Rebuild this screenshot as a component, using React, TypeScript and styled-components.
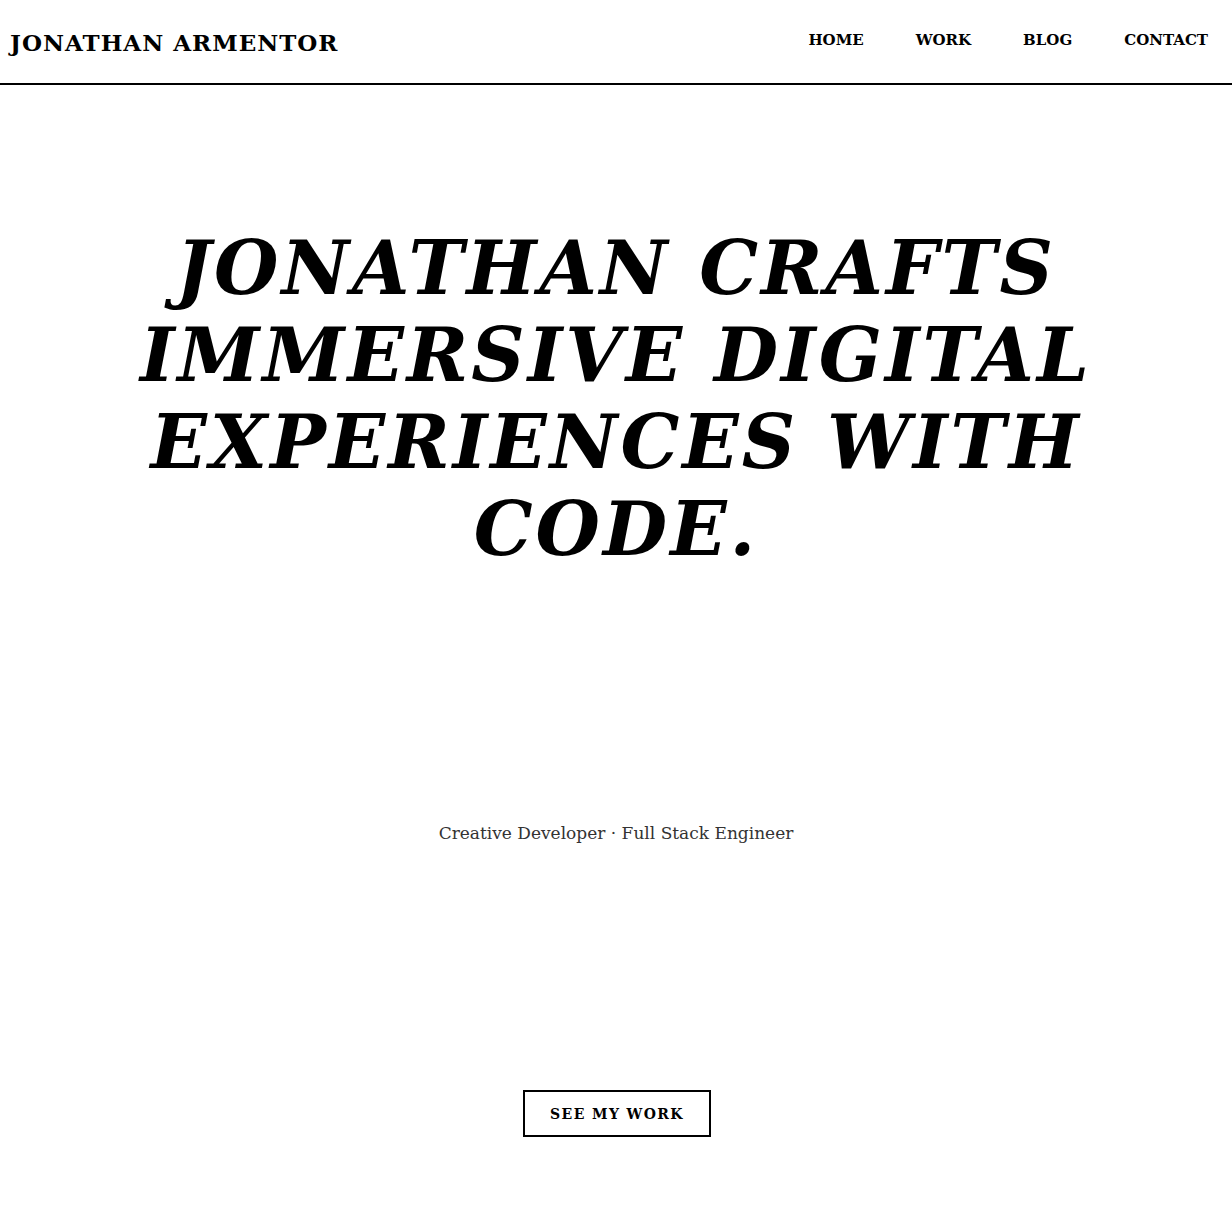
import React from "react";
import styled, { createGlobalStyle } from "styled-components";

const GlobalStyle = createGlobalStyle`
  html, body {
    margin: 0;
    padding: 0;
    background: #ffffff;
    color: #000000;
    font-family: "DejaVu Serif", Georgia, serif;
  }
  * {
    box-sizing: border-box;
  }
`;

const Page = styled.div`
  min-height: 1212px;
  display: flex;
  flex-direction: column;
`;

const Header = styled.header`
  height: 85px;
  display: flex;
  align-items: center;
  justify-content: space-between;
  padding: 0 24px 0 10px;
  border-bottom: 2px solid #000;
`;

const Logo = styled.div`
  font-size: 23px;
  font-weight: bold;
  letter-spacing: 1px;
  text-transform: uppercase;
  margin-top: 2px;
`;

const Nav = styled.nav`
  display: flex;
  gap: 52px;
  margin-top: -4px;
`;

const NavLink = styled.a`
  font-size: 15px;
  font-weight: bold;
  text-transform: uppercase;
  color: #000;
  text-decoration: none;
  cursor: pointer;
`;

const Hero = styled.main`
  flex: 1;
  display: flex;
  flex-direction: column;
  align-items: center;
  padding-top: 140px;
`;

const Headline = styled.h1`
  margin: 0;
  max-width: 1000px;
  text-align: center;
  font-size: 74px;
  line-height: 87px;
  font-weight: bold;
  font-style: italic;
  letter-spacing: 3px;
  text-transform: uppercase;
`;

const Tagline = styled.p`
  margin: 250px 0 0;
  font-size: 17px;
  color: #333;
`;

const CtaButton = styled.button`
  margin: 247px 0 0 2px;
  width: 188px;
  height: 47px;
  border: 2px solid #000;
  background: transparent;
  font-family: inherit;
  font-size: 14px;
  font-weight: bold;
  letter-spacing: 1.4px;
  text-transform: uppercase;
  color: #000;
  cursor: pointer;
`;

const links = ["Home", "Work", "Blog", "Contact"];

export default function App() {
  return (
    <Page>
      <GlobalStyle />
      <Header>
        <Logo>Jonathan Armentor</Logo>
        <Nav>
          {links.map((l) => (
            <NavLink key={l}>{l}</NavLink>
          ))}
        </Nav>
      </Header>
      <Hero>
        <Headline>Jonathan crafts immersive digital experiences with code.</Headline>
        <Tagline>Creative Developer · Full Stack Engineer</Tagline>
        <CtaButton>See my work</CtaButton>
      </Hero>
    </Page>
  );
}
